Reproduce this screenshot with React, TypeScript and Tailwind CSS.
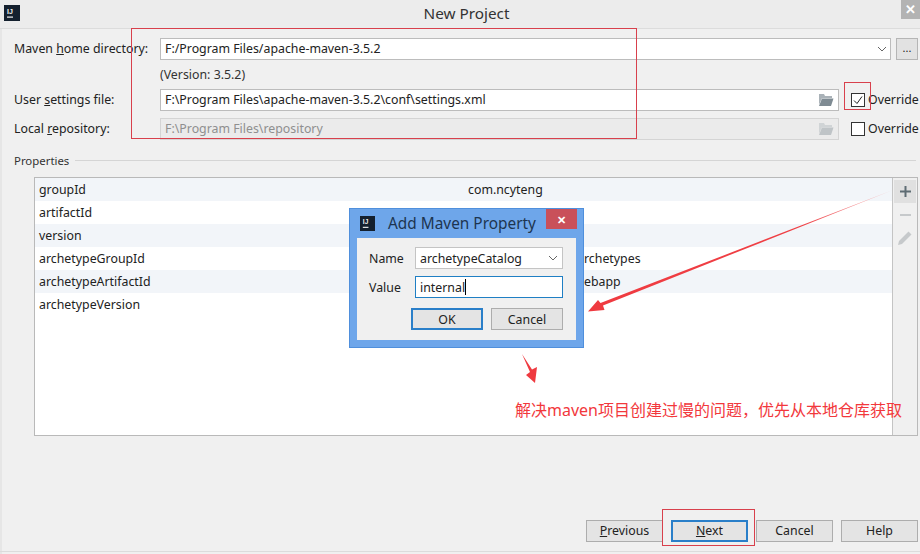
import React from "react";

const rows: [string, string, string][] = [
  ["groupId", "com.ncyteng", ""],
  ["artifactId", "", ""],
  ["version", "", ""],
  ["archetypeGroupId", "rchetypes", "ml-[116px]"],
  ["archetypeArtifactId", "ebapp", "ml-[116px]"],
  ["archetypeVersion", "", ""],
];

function IJ({ size }: { size: number }) {
  return (
    <svg width={size} height={size} viewBox="0 0 16 16" className="shrink-0">
      <rect width="16" height="16" fill="#14202e" />
      <text x="3" y="8.5" fontSize="7" fontWeight="700" fill="#f2f2f2" fontFamily="Liberation Sans, sans-serif">IJ</text>
      <rect x="3" y="11.5" width="6" height="1.2" fill="#f2f2f2" />
    </svg>
  );
}

function Folder({ dim }: { dim?: boolean }) {
  return (
    <svg width="16" height="14" viewBox="0 0 16 14" className={dim ? "opacity-40" : ""}>
      <path d="M1 1h5l1 2h7v2H4L1 12z" fill="#aab2b8" />
      <path d="M4 5.5h11.5L13 13H1z" fill="#7f8b93" />
    </svg>
  );
}

function Chevron() {
  return (
    <svg width="10" height="6" viewBox="0 0 10 6" fill="none" stroke="#666" strokeWidth="1">
      <path d="M1 1l4 4 4-4" />
    </svg>
  );
}

function Label({ children }: { children: React.ReactNode }) {
  return <div className="w-[146px] shrink-0 text-[#222]">{children}</div>;
}

function Btn({ children, focus, className = "" }: { children: React.ReactNode; focus?: boolean; className?: string }) {
  return (
    <div
      className={
        "flex h-[22px] shrink-0 items-center justify-center bg-[#e4e4e4] text-[#222] " +
        (focus ? "border-2 border-[#2a7fc9] " : "border border-[#adadad] ") +
        className
      }
    >
      {children}
    </div>
  );
}

export default function App() {
  return (
    <div className="relative flex h-[554px] w-[920px] flex-col overflow-hidden bg-[#f0f0f0] font-['Noto_Sans','Noto_Sans_CJK_SC',sans-serif] text-[12.35px] leading-[18px] text-[#222] shadow-[inset_2px_0_0_#e6e6e6]">
      {/* title bar */}
      <div className="flex h-[29px] shrink-0 items-start justify-between border-b border-[#dcdcdc] bg-[#ececec] pl-[4px] pt-[5px]">
        <IJ size={16} />
        <div className="pl-[12px] text-[15.3px] leading-[16px] text-[#333]">New Project</div>
        <div className="-mt-[5px] flex h-[19px] w-[19px] items-center justify-center bg-[#b3b3b3] text-[13px] font-bold leading-none text-white">✕</div>
      </div>

      {/* form */}
      <div className="flex flex-col pl-[14px] pr-[2px] pt-[9px]">
        <div className="flex h-[22px] items-center">
          <Label>
            Maven <u>h</u>ome directory:
          </Label>
          <div className="flex h-[22px] w-[731px] shrink-0 items-center justify-between border border-[#bcbcbc] bg-white pl-[4px] pr-[3px]">
            <span>F:/Program Files/apache-maven-3.5.2</span>
            <Chevron />
          </div>
          <div className="ml-[5px] flex h-[22px] w-[22px] shrink-0 items-center justify-center border border-[#b5b5b5] bg-[#e2e2e2] pb-[3px] text-[11px]">...</div>
        </div>
        <div className="mt-[6px] h-[18px] pl-[146px] text-[#333]">(Version: 3.5.2)</div>
        <div className="mt-[5px] flex h-[22px] items-center">
          <Label>
            User <u>s</u>ettings file:
          </Label>
          <div className="flex h-[22px] w-[679px] shrink-0 items-center justify-between border border-[#bcbcbc] bg-white pl-[4px] pr-[4px]">
            <span>F:\Program Files\apache-maven-3.5.2\conf\settings.xml</span>
            <Folder />
          </div>
          <div className="ml-[12px] flex h-[14px] w-[14px] shrink-0 items-center justify-center border border-[#333] bg-white">
            <svg width="10" height="9" viewBox="0 0 10 9" fill="none" stroke="#222" strokeWidth="1">
              <path d="M1 4.500l3 3 5-7" />
            </svg>
          </div>
          <span className="ml-[3px] shrink-0">Override</span>
        </div>
        <div className="mt-[7px] flex h-[22px] items-center">
          <Label>
            Local <u>r</u>epository:
          </Label>
          <div className="flex h-[22px] w-[679px] shrink-0 items-center justify-between border border-[#d4d4d4] bg-[#ebebeb] pl-[4px] pr-[4px] text-[#8f8f8f]">
            <span>F:\Program Files\repository</span>
            <Folder dim />
          </div>
          <div className="ml-[12px] h-[14px] w-[14px] shrink-0 border border-[#333] bg-white" />
          <span className="ml-[3px] shrink-0">Override</span>
        </div>

        {/* properties */}
        <div className="mt-[11px] flex h-[18px] items-center pr-[2px]">
          <span className="pt-[1px] text-[11.4px] text-[#333]">Properties</span>
          <div className="ml-[6px] h-px flex-1 bg-[#d5d5d5]" />
        </div>
        <div className="ml-[20px] mt-[8px] flex h-[259px] w-[884px] border border-[#b9b9b9] bg-white">
          <div className="flex-1">
            {rows.map(([k, v, offset], i) => (
              <div key={k} className={"flex h-[23px] items-center whitespace-nowrap pl-[4px] " + (i % 2 === 0 ? "bg-[#f2f5f9]" : "bg-white")}>
                <span className="w-[429px] shrink-0">{k}</span>
                <span className={offset}>{v}</span>
              </div>
            ))}
          </div>
          <div className="flex w-[25px] flex-col items-center border-l border-[#c4c4c4] bg-[#f0f0f0] pt-[2px]">
            <div className="flex h-[23px] w-[22px] items-center justify-center bg-[#e0e0e0]">
              <svg width="13" height="13" viewBox="0 0 13 13"><path d="M5.500 1h2v4.500h4.500v2H7.500v4.500h-2V7.500H1v-2h4.500z" fill="#5f6d74" /></svg>
            </div>
            <div className="flex h-[23px] items-center justify-center">
              <div className="h-[2px] w-[11px] bg-[#c6c9cb]" />
            </div>
            <div className="flex h-[23px] items-center justify-center">
              <svg width="16" height="16" viewBox="0 0 16 16"><path d="M11.500 1.500l3 3L5 14l-4 1 1-4z" fill="#c6c9cb" /></svg>
            </div>
          </div>
        </div>
      </div>

      {/* bottom buttons */}
      <div className="mt-[84px] flex justify-end gap-[8px] pr-[2px]">
        <Btn className="w-[77px]"><span><u>P</u>revious</span></Btn>
        <Btn focus className="w-[77px]"><span><u>N</u>ext</span></Btn>
        <Btn className="w-[77px]">Cancel</Btn>
        <Btn className="w-[77px]">Help</Btn>
      </div>
      <div className="mt-[9px] h-px bg-[#dcdcdc]" />

      {/* annotation note */}
      <div className="absolute left-[515px] top-[400px] text-[16px] leading-[20px] text-[#f2383c]">解决maven项目创建过慢的问题，优先从本地仓库获取</div>

      {/* annotations */}
      <div className="absolute left-[131px] top-[28px] h-[111px] w-[506px] border border-[#d8404c]" />
      <div className="absolute left-[844px] top-[82px] h-[28px] w-[27px] border border-[#d8404c]" />
      <div className="absolute left-[662px] top-[509px] h-[37px] w-[93px] border border-[#d8404c]" />
      <svg className="absolute left-0 top-0" width="920" height="554" viewBox="0 0 920 554">
        <defs>
          <linearGradient id="fade" x1="893" y1="190" x2="590" y2="312" gradientUnits="userSpaceOnUse">
            <stop offset="0" stopColor="#f6b9bb" />
            <stop offset="0.3" stopColor="#ef4045" />
            <stop offset="1" stopColor="#ef3a40" />
          </linearGradient>
        </defs>
        <path d="M893 190L603 305.500L604.500 310L588 311.500L598 300L600.500 303z" fill="url(#fade)" />
        <path d="M522 354L532 369.500L537 367L535 383L526 375L530 372z" fill="#ef3a40" />
      </svg>

      {/* dialog */}
      <div className="absolute left-[349px] top-[208px] flex h-[140px] w-[235px] flex-col border border-[#4f8fdc] bg-[#6ea6ea] px-[7px] pb-[7px]">
        <div className="flex h-[29px] shrink-0 items-center pl-[3px]">
          <IJ size={15} />
          <span className="ml-[13px] mt-[1px] text-[15.400px] text-[#1d3550]">Add Maven Property</span>
          <div className="absolute right-[6px] top-0 flex h-[20px] w-[31px] items-center justify-center bg-[#c9505a] text-[11px] font-bold leading-none text-white">✕</div>
        </div>
        <div className="flex flex-1 flex-col bg-[#f0f0f0] pl-[12px] pr-[13px] pt-[9px]">
          <div className="flex h-[22px] items-center">
            <span className="w-[46px] shrink-0 pt-[2px]">Name</span>
            <div className="flex h-[22px] flex-1 items-center justify-between border border-[#c4c4c4] bg-white pl-[4px] pr-[4px]">
              <span className="pt-[2px]">archetypeCatalog</span>
              <Chevron />
            </div>
          </div>
          <div className="mt-[7px] flex h-[22px] items-center">
            <span className="w-[46px] shrink-0 pt-[2px]">Value</span>
            <div className="flex h-[22px] flex-1 items-center border border-[#1f7fc4] bg-white pl-[4px]">
              <span className="pt-[2px]">internal</span>
              <div className="h-[16px] w-px bg-black" />
            </div>
          </div>
          <div className="mt-[10px] flex justify-end gap-[8px]">
            <Btn focus className="w-[72px] pt-[2px]">OK</Btn>
            <Btn className="w-[72px] pt-[2px]">Cancel</Btn>
          </div>
        </div>
      </div>
    </div>
  );
}
